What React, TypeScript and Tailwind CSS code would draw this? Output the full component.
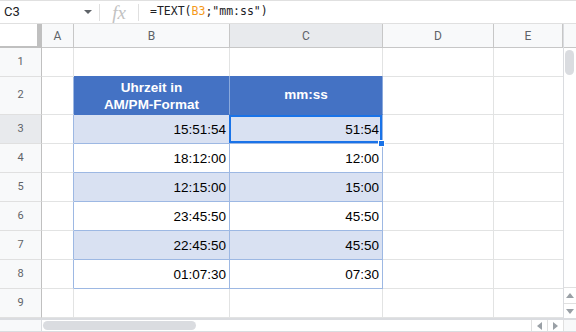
import React from 'react';

const cols = ['A', 'B', 'C', 'D', 'E'];

const rows: { n: number; b?: string; c?: string; shade?: boolean }[] = [
  { n: 1 },
  { n: 2 },
  { n: 3, b: '15:51:54', c: '51:54', shade: true },
  { n: 4, b: '18:12:00', c: '12:00' },
  { n: 5, b: '12:15:00', c: '15:00', shade: true },
  { n: 6, b: '23:45:50', c: '45:50' },
  { n: 7, b: '22:45:50', c: '45:50', shade: true },
  { n: 8, b: '01:07:30', c: '07:30' },
  { n: 9 },
];

const Tri = ({ dir }: { dir: 'up' | 'down' | 'left' | 'right' }) => {
  const pts = {
    up: '0,5 4,0 8,5',
    down: '0,0 8,0 4,5',
    left: '5,0 5,8 0,4',
    right: '0,0 0,8 5,4',
  }[dir];
  const horiz = dir === 'left' || dir === 'right';
  return (
    <svg width={horiz ? 5 : 8} height={horiz ? 8 : 5} viewBox={horiz ? '0 0 5 8' : '0 0 8 5'}>
      <polygon points={pts} fill="#9aa0a6" />
    </svg>
  );
};

export default function App() {
  const tableBorder = 'border-[#9db8e3]';

  return (
    <div className="w-[576px] h-[332px] overflow-hidden bg-white text-[#202124]" style={{ fontFamily: '"Liberation Sans", Arial, sans-serif' }}>
      {/* formula bar */}
      <div className="h-[24px] flex items-center border-t border-b border-[#e0e0e0] box-border">
        <div className="w-[99px] flex items-center pl-[4px] pr-[7px] text-[13px] text-[#202124]" style={{ fontFamily: 'Roboto, sans-serif' }}>
          <span className="flex-1">C3</span>
          <svg width="8" height="4" viewBox="0 0 8 4">
            <polygon points="0,0 8,0 4,4" fill="#5f6368" />
          </svg>
        </div>
        <div className="w-px h-[17px] bg-[#e0e0e0]" />
        <div className="w-[38px] flex items-center justify-center text-[#c2c2c2] italic text-[19px] leading-none" style={{ fontFamily: '"Liberation Serif", serif' }}>
          fx
        </div>
        <div className="w-px h-[17px] bg-[#e0e0e0]" />
        <div className="pl-[11px] text-[11.5px] text-[#202124]" style={{ fontFamily: '"DejaVu Sans Mono", monospace' }}>
          =TEXT(<span className="text-[#f4991b]">B3</span>;"mm:ss")
        </div>
      </div>

      <div className="flex">
        {/* sheet grid */}
        <div className="grid grid-cols-[42px_32px_156px_153px_111px_69px] grid-rows-[24px_29px_38px_29px_29px_29px_29px_29px_29px_29px]">
          {/* corner */}
          <div className="bg-white border-r-[5px] border-b-[2px] border-[#c0c0c0] box-border" />
          {cols.map((c) => (
            <div
              key={c}
              className={`flex items-center justify-center text-[12px] text-[#5f6368] border-r border-b border-[#c7c7c7] box-border ${c === 'C' ? 'bg-[#e8eaed] text-[#3c4043]' : 'bg-[#f8f9fa]'}`}
              style={{ fontFamily: 'Roboto, sans-serif' }}
            >
              {c}
            </div>
          ))}

          {rows.map((r) => {
            const inTable = r.n >= 2 && r.n <= 8;
            const fill = r.n === 2 ? 'bg-[#4472c4]' : r.shade ? 'bg-[#d9e1f2]' : 'bg-white';
            return (
              <React.Fragment key={r.n}>
                <div
                  className={`flex items-center justify-center text-[11px] text-[#5f6368] border-r border-r-[#c0c0c0] border-b border-b-[#e0e0e0] box-border ${r.n === 3 ? 'bg-[#e8eaed]' : 'bg-[#f8f9fa]'}`}
                  style={{ fontFamily: 'Roboto, sans-serif' }}
                >
                  {r.n}
                </div>
                {/* A */}
                <div className={`border-b border-[#e2e3e3] border-r box-border ${inTable ? 'border-r-[#9db8e3]' : ''}`} />
                {/* B */}
                {r.n === 2 ? (
                  <div className={`${fill} border-r border-b border-r-[#8aa9dc] border-b-[#4472c4] box-border flex items-center justify-center text-center text-white font-bold text-[13.5px] leading-[17px]`}>
                    Uhrzeit in
                    <br />
                    AM/PM-Format
                  </div>
                ) : (
                  <div
                    className={`${fill} border-r border-b box-border flex items-center justify-end pr-[3px] pt-[2px] text-[13.5px] text-black ${inTable ? tableBorder : r.n === 1 ? 'border-r-[#e2e3e3] border-b-[#4472c4]' : 'border-[#e2e3e3]'}`}
                  >
                    {r.b}
                  </div>
                )}
                {/* C */}
                {r.n === 2 ? (
                  <div className={`${fill} border-r border-b border-r-[#8aa9dc] border-b-[#4472c4] box-border flex items-center justify-center text-white font-bold text-[13.5px]`}>
                    mm:ss
                  </div>
                ) : (
                  <div
                    className={`relative ${fill} border-r border-b box-border flex items-center justify-end pr-[3px] pt-[2px] text-[13.5px] text-black ${inTable ? tableBorder : r.n === 1 ? 'border-r-[#e2e3e3] border-b-[#4472c4]' : 'border-[#e2e3e3]'}`}
                  >
                    {r.c}
                    {r.n === 3 && (
                      <>
                        <div className="absolute -left-px top-0 right-0 bottom-0 border-2 border-[#1a73e8]" />
                        <div className="absolute -right-[3px] -bottom-[4px] w-[7px] h-[7px] bg-[#1a73e8] border border-white z-10" />
                      </>
                    )}
                  </div>
                )}
                {/* D */}
                <div className="border-r border-b border-[#e2e3e3] box-border" />
                {/* E */}
                <div className="border-b border-[#e2e3e3] box-border" />
              </React.Fragment>
            );
          })}
        </div>

        {/* vertical scrollbar */}
        <div className="w-[13px] h-[294px] flex flex-col border-l border-[#dadce0] box-border">
          <div className="h-[24px] bg-[#f8f9fa] border-b border-[#c7c7c7] box-border" />
          <div className="flex-1 relative">
            <div className="mt-[2px] ml-[1px] w-[9px] h-[25px] rounded-full bg-[#dadce0]" />
          </div>
          <div className="h-[16px] flex items-center justify-center border-t border-[#e0e0e0] box-border">
            <Tri dir="up" />
          </div>
          <div className="h-[15px] flex items-center justify-center border-t border-[#e0e0e0] box-border">
            <Tri dir="down" />
          </div>
        </div>
      </div>

      {/* horizontal scrollbar */}
      <div className="h-[14px] flex border-t-2 border-b border-[#dadce0] box-border">
        <div className="w-[42px] bg-[#f8f9fa] border-r border-[#dadce0] box-border" />
        <div className="w-[489px] flex items-center pl-[1px]">
          <div className="w-[153px] h-[9px] rounded-full bg-[#dadce0]" />
        </div>
        <div className="w-[16px] flex items-center justify-center border-l border-[#e0e0e0] box-border">
          <Tri dir="left" />
        </div>
        <div className="w-[16px] flex items-center justify-center border-l border-[#e0e0e0] box-border">
          <Tri dir="right" />
        </div>
        <div className="w-[13px] bg-[#f8f9fa] border-l border-[#e0e0e0] box-border" />
      </div>
    </div>
  );
}
